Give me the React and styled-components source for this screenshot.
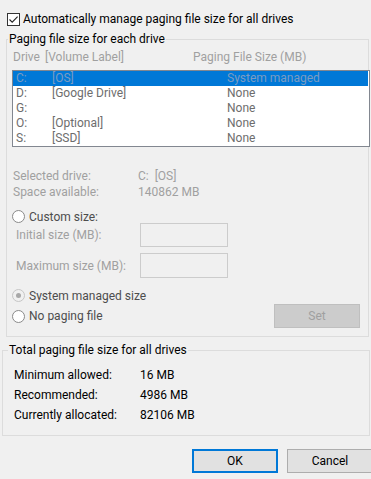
import styled, { createGlobalStyle } from 'styled-components';

const GlobalStyle = createGlobalStyle`
    html, body {
        margin: 0;
        padding: 0;
        overflow: hidden;
        background: #f0f0f0;
        font-family: Roboto, "Noto Sans", "Liberation Sans", sans-serif;
        font-size: 12px;
        color: #000;
    }
    * { box-sizing: border-box; }
`

const drives = [
    { letter: 'C:', label: '[OS]', size: 'System managed', selected: true },
    { letter: 'D:', label: '[Google Drive]', size: 'None' },
    { letter: 'G:', label: '', size: 'None' },
    { letter: 'O:', label: '[Optional]', size: 'None' },
    { letter: 'S:', label: '[SSD]', size: 'None' },
];

const totals = [
    ['Minimum allowed:', '16 MB'],
    ['Recommended:', '4986 MB'],
    ['Currently allocated:', '82106 MB'],
];

function VirtualMemory() {
    return (
        <Page>
            <GlobalStyle />
            <AutoRow>
                <CheckBox>
                    <svg width="11" height="11" viewBox="0 0 11 11">
                        <path d="M1.5 5.5 L4.2 8.2 L9.6 2.6" fill="none" stroke="#222" strokeWidth="1.1" />
                    </svg>
                </CheckBox>
                Automatically manage paging file size for all drives
            </AutoRow>

            <Group $margin="4px 2px 0 6px" $padding="2px 8px 8px 5px">
                <Legend $offset={-4}>Paging file size for each drive</Legend>
                <Header>
                    <span>Drive</span>
                    <span>[Volume Label]</span>
                    <span>Paging File Size (MB)</span>
                </Header>
                <ListBox>
                    {drives.map((d) => (
                        <ListRow key={d.letter} $selected={d.selected}>
                            <span>{d.letter}</span>
                            <span>{d.label}</span>
                            <span>{d.size}</span>
                        </ListRow>
                    ))}
                </ListBox>

                <InfoGrid>
                    <span>Selected drive:</span>
                    <span>C:&nbsp; [OS]</span>
                    <span>Space available:</span>
                    <span>140862 MB</span>
                </InfoGrid>

                <RadioRow $top={10}>
                    <Radio />
                    Custom size:
                </RadioRow>
                <SizeRow $top={0} $h={24}>
                    <SizeLabel>Initial size (MB):</SizeLabel>
                    <TextBox />
                </SizeRow>
                <SizeRow $top={6} $h={25}>
                    <SizeLabel>Maximum size (MB):</SizeLabel>
                    <TextBox />
                </SizeRow>
                <RadioRow $top={11}>
                    <Radio $checked $disabled />
                    System managed size
                </RadioRow>
                <LastRow>
                    <RadioRow $top={0}>
                        <Radio />
                        No paging file
                    </RadioRow>
                    <SetButton>Set</SetButton>
                </LastRow>
            </Group>

            <Group $margin="5px 1px 0 2px" $padding="7px 8px 10px 11px">
                <Legend $offset={-6}>Total paging file size for all drives</Legend>
                <TotalGrid>
                    {totals.map(([k, v]) => (
                        <TotalRow key={k}>
                            <span>{k}</span>
                            <span>{v}</span>
                        </TotalRow>
                    ))}
                </TotalGrid>
            </Group>

            <ButtonRow>
                <DialogButton $default>OK</DialogButton>
                <DialogButton>Cancel</DialogButton>
            </ButtonRow>
        </Page>
    )
}

const Page = styled.div`
    display: flex;
    flex-direction: column;
    width: 371px;
    height: 479px;
`
const AutoRow = styled.label`
    display: flex;
    align-items: center;
    gap: 3px;
    height: 16px;
    margin: 11px 0 0 7px;
    line-height: 16px;
`
const CheckBox = styled.span`
    display: flex;
    align-items: center;
    justify-content: center;
    width: 13px;
    height: 13px;
    border: 1px solid #333;
    background: #fff;
`
const Group = styled.fieldset`
    margin: ${(p) => p.$margin};
    padding: ${(p) => p.$padding};
    border: 1px solid #dcdcdc;
    min-width: 0;
`
const Legend = styled.legend`
    margin-left: ${(p) => p.$offset}px;
    padding: 0 1px;
    line-height: 16px;
    color: #000;
`
const Header = styled.div`
    display: grid;
    grid-template-columns: 32px 148px 1fr;
    padding-left: 1px;
    line-height: 16px;
    color: #a0a0a0;
    white-space: nowrap;
`
const ListBox = styled.div`
    margin: 5px -10px 0 0;
    height: 77px;
    border: 1px solid #828790;
    background: #fff;
`
const ListRow = styled.div`
    display: grid;
    grid-template-columns: 36px 175px 1fr;
    height: 15px;
    margin-right: 1px;
    padding-left: 3px;
    line-height: 15px;
    white-space: nowrap;
    background: ${(p) => (p.$selected ? '#0078d7' : 'transparent')};
    color: ${(p) => (p.$selected ? '#7b9cc2' : '#6d6d6d')};
`
const InfoGrid = styled.div`
    display: grid;
    grid-template-columns: 125px 1fr;
    margin-top: 21px;
    padding-left: 1px;
    line-height: 16px;
    color: #a0a0a0;
`
const RadioRow = styled.label`
    display: flex;
    align-items: center;
    gap: 4px;
    height: 13px;
    margin-top: ${(p) => p.$top}px;
    line-height: 16px;
    color: #4d4d4d;
    white-space: nowrap;
`
const Radio = styled.span`
    position: relative;
    flex: none;
    width: 13px;
    height: 13px;
    border-radius: 50%;
    border: 1px solid ${(p) => (p.$disabled ? '#c6c6c6' : '#8a8a8a')};
    background: ${(p) => (p.$disabled ? '#f0f0f0' : '#fff')};
    &::after {
        content: '';
        display: ${(p) => (p.$checked ? 'block' : 'none')};
        position: absolute;
        left: 3px;
        top: 3px;
        width: 5px;
        height: 5px;
        border-radius: 50%;
        background: #a8a8a8;
    }
`
const SizeRow = styled.div`
    display: flex;
    align-items: center;
    height: ${(p) => p.$h}px;
    margin-top: ${(p) => p.$top}px;
    padding-left: 4px;
    color: #a0a0a0;
`
const SizeLabel = styled.span`
    width: 124px;
`
const TextBox = styled.span`
    width: 88px;
    height: 100%;
    border: 1px solid #cccccc;
    background: #f0f0f0;
`
const LastRow = styled.div`
    display: flex;
    align-items: center;
    justify-content: space-between;
    height: 24px;
    margin-top: 2px;
`
const SetButton = styled.button`
    width: 86px;
    height: 24px;
    border: 1px solid #bfbfbf;
    background: #cccccc;
    color: #a0a0a0;
    font: inherit;
    padding: 0;
`
const TotalGrid = styled.div`
    display: flex;
    flex-direction: column;
`
const TotalRow = styled.div`
    display: grid;
    grid-template-columns: 126px 1fr;
    line-height: 20px;
    color: #000;
`
const ButtonRow = styled.div`
    display: flex;
    justify-content: flex-end;
    gap: 9px;
    margin: 13px -2px 0 0;
`
const DialogButton = styled.button`
    width: 86px;
    height: 24px;
    padding: 0;
    border: ${(p) => (p.$default ? '2px solid #0078d7' : '1px solid #adadad')};
    background: #e1e1e1;
    color: #000;
    font: inherit;
`

export default VirtualMemory
